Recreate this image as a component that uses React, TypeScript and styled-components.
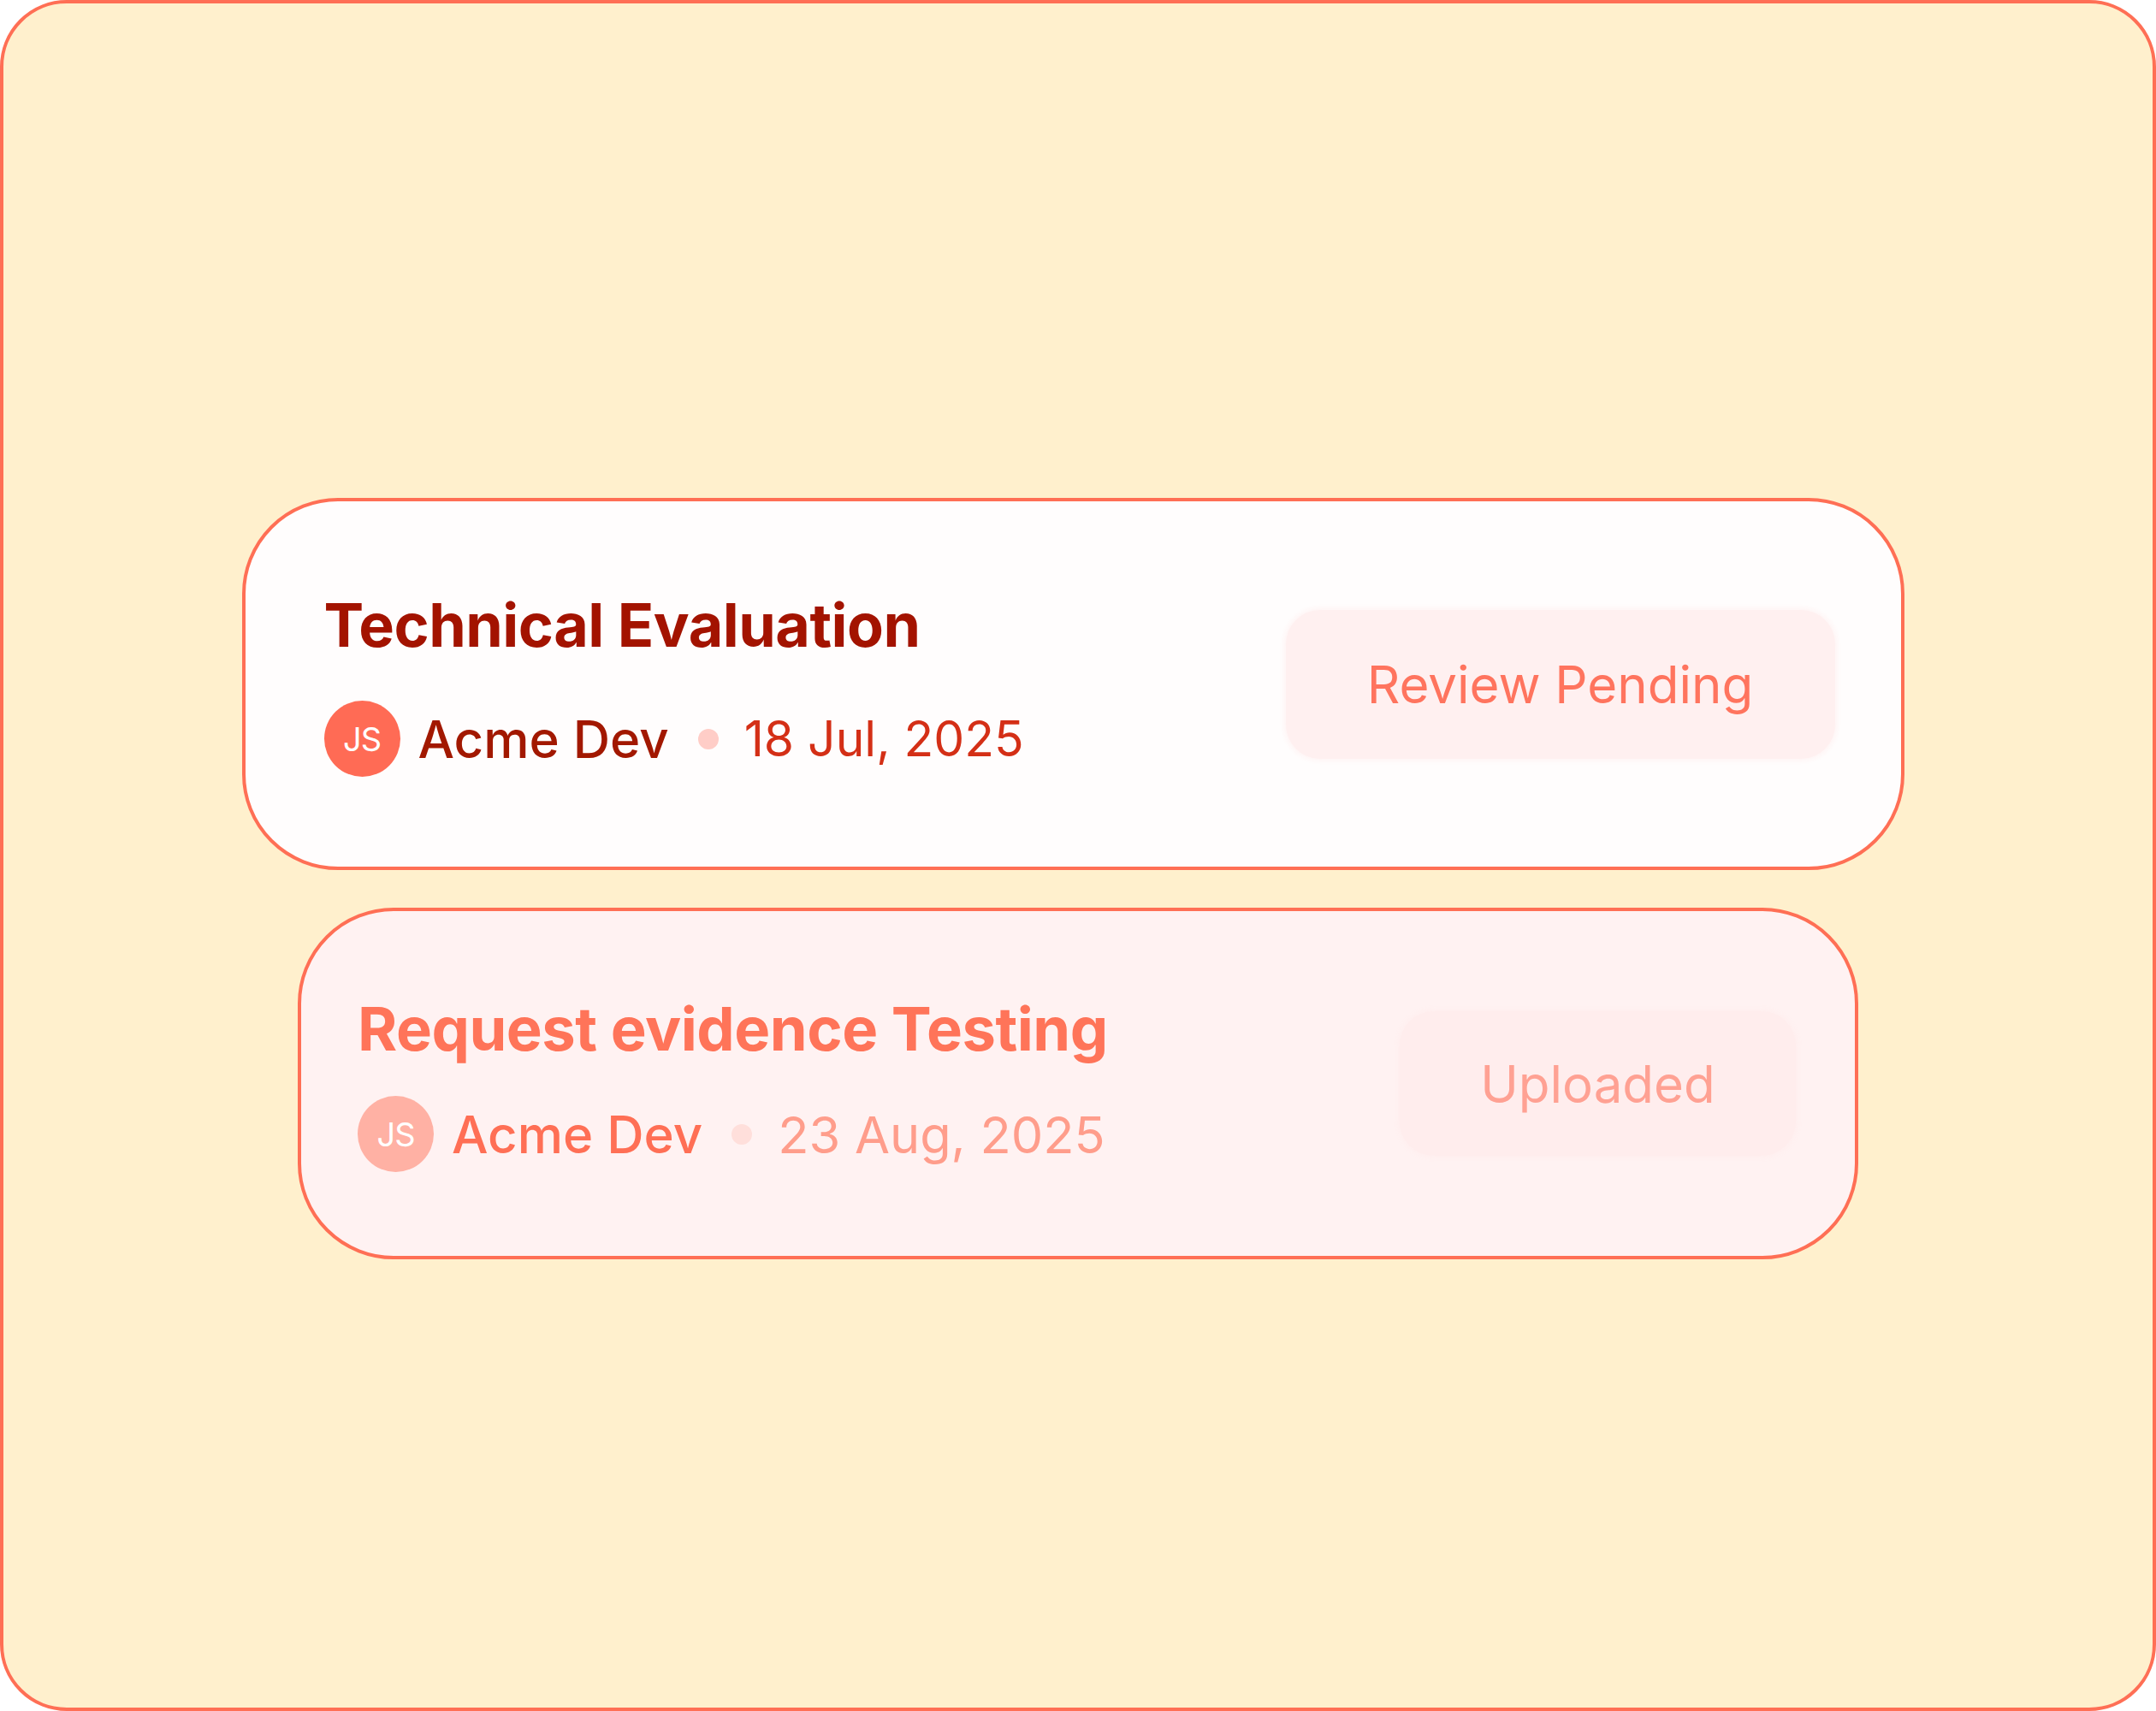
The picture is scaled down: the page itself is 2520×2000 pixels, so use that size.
import React from "react";
import styled, { createGlobalStyle } from "styled-components";

const Global = createGlobalStyle`
  html, body { margin: 0; padding: 0; background: #ffffff; }
  body { font-family: Inter, "Noto Sans", sans-serif; }
  * { box-sizing: border-box; }
`;

const Frame = styled.div`
  width: 2520px;
  height: 2000px;
  border: 4px solid #ff6f55;
  border-radius: 78px;
  background: #fff0cd;
  display: flex;
  flex-direction: column;
  align-items: center;
  padding-top: 578px;
  gap: 44px;
`;

type Tone = "active" | "muted";

const Card = styled.div<{ $tone: Tone; $w: number; $h: number; $pl: number; $pr: number }>`
  width: ${(p) => p.$w}px;
  height: ${(p) => p.$h}px;
  border: 4px solid #ff6f55;
  border-radius: 112px;
  background: ${(p) => (p.$tone === "active" ? "#fffdfd" : "#fff2f2")};
  display: flex;
  align-items: center;
  justify-content: space-between;
  padding: 0 ${(p) => p.$pr}px 0 ${(p) => p.$pl}px;
  margin-left: ${(p) => (p.$tone === "active" ? "-12px" : "0")};
`;

const Info = styled.div<{ $tone: Tone }>`
  display: flex;
  flex-direction: column;
  gap: ${(p) => (p.$tone === "active" ? "44px" : "34px")};
  margin-top: -4px;
`;

const Title = styled.div<{ $tone: Tone }>`
  font-size: ${(p) => (p.$tone === "active" ? "70px" : "70.5px")};
  line-height: 88px;
  font-weight: 700;
  letter-spacing: -0.5px;
  color: ${(p) => (p.$tone === "active" ? "#a31300" : "#ff7459")};
`;

const Meta = styled.div`
  display: flex;
  align-items: center;
`;

const Avatar = styled.div<{ $tone: Tone }>`
  width: 89px;
  height: 89px;
  border-radius: 50%;
  background: ${(p) => (p.$tone === "active" ? "#ff6b55" : "#ffb1a4")};
  color: #ffffff;
  font-size: 38px;
  font-weight: 400;
  display: flex;
  align-items: center;
  justify-content: center;
  letter-spacing: -1px;
  margin-right: 21px;
`;

const Name = styled.span<{ $tone: Tone }>`
  font-size: 60px;
  font-weight: 500;
  color: ${(p) => (p.$tone === "active" ? "#a21800" : "#ff6f55")};
`;

const Dot = styled.span<{ $tone: Tone }>`
  width: 24px;
  height: 24px;
  border-radius: 50%;
  background: ${(p) => (p.$tone === "active" ? "#ffcdc7" : "#ffdfdb")};
  margin: 0 30px 0 34px;
`;

const DateText = styled.span<{ $tone: Tone }>`
  font-size: ${(p) => (p.$tone === "active" ? "57px" : "59.5px")};
  font-weight: 400;
  color: ${(p) => (p.$tone === "active" ? "#d42f16" : "#ff9d8b")};
`;

const Badge = styled.div<{ $tone: Tone; $w: number; $h: number }>`
  width: ${(p) => p.$w}px;
  height: ${(p) => p.$h}px;
  border-radius: 40px;
  background: ${(p) => (p.$tone === "active" ? "#fff0f0" : "#ffeded")};
  box-shadow: 0 0 6px 2px ${(p) => (p.$tone === "active" ? "#fff3f3" : "#ffeeee")};
  display: flex;
  align-items: center;
  justify-content: center;
  font-size: 60px;
  font-weight: 400;
  color: ${(p) => (p.$tone === "active" ? "#ff745e" : "#ffa193")};
`;

type Item = {
  tone: Tone;
  title: string;
  date: string;
  status: string;
  w: number;
  h: number;
  pl: number;
  pr: number;
  bw: number;
  bh: number;
};

const items: Item[] = [
  { tone: "active", title: "Technical Evaluation", date: "18 Jul, 2025", status: "Review Pending", w: 1943, h: 435, pl: 92, pr: 77, bw: 642, bh: 174 },
  { tone: "muted", title: "Request evidence Testing", date: "23 Aug, 2025", status: "Uploaded", w: 1824, h: 411, pl: 66, pr: 69, bw: 463, bh: 169 },
];

export default function App() {
  return (
    <>
      <Global />
      <Frame>
        {items.map((it) => (
          <Card key={it.title} $tone={it.tone} $w={it.w} $h={it.h} $pl={it.pl} $pr={it.pr}>
            <Info $tone={it.tone}>
              <Title $tone={it.tone}>{it.title}</Title>
              <Meta>
                <Avatar $tone={it.tone}>JS</Avatar>
                <Name $tone={it.tone}>Acme Dev</Name>
                <Dot $tone={it.tone} />
                <DateText $tone={it.tone}>{it.date}</DateText>
              </Meta>
            </Info>
            <Badge $tone={it.tone} $w={it.bw} $h={it.bh}>
              {it.status}
            </Badge>
          </Card>
        ))}
      </Frame>
    </>
  );
}
